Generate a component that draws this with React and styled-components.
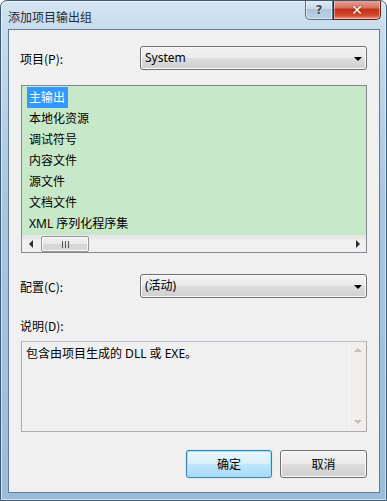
import React from "react";
import styled, { createGlobalStyle } from "styled-components";

const Global = createGlobalStyle`
  html, body { margin: 0; padding: 0; background: #ffffff; }
  body { font-family: "Noto Sans CJK SC", "Noto Sans", sans-serif; font-size: 12px; }
  * { box-sizing: border-box; }
`;

const Window = styled.div`
  position: relative;
  width: 387px;
  height: 501px;
  border: 1px solid #3d5a75;
  border-radius: 7px 7px 0 0;
  background: linear-gradient(180deg, #d5e4f1 0px, #c7dbec 30px, #a9c6df 200px, #9bbcd8 500px);
  display: flex;
  flex-direction: column;
  overflow: hidden;
  box-shadow: inset 0 0 0 1px rgba(255,255,255,0.55);
`;

const TitleBar = styled.div`
  height: 28px;
  display: flex;
  align-items: center;
  padding: 3px 0 0 7px;
  color: #1e2a36;
  font-size: 12px;
  line-height: 14px;
`;

const Caption = styled.div`
  position: absolute;
  top: -1px;
  right: 5px;
  display: flex;
`;

const CapButton = styled.div`
  height: 20px;
  width: ${p => p.$w}px;
  border: 1px solid ${p => (p.$close ? "#5e1b12" : "#5a7189")};
  border-top: none;
  border-radius: ${p => (p.$close ? "0 0 5px 0" : "0 0 0 5px")};
  background: ${p =>
    p.$close
      ? "linear-gradient(180deg, #e8a89c 0%, #d9735f 40%, #c4301a 50%, #d14a2e 80%, #e6917a 100%)"
      : "linear-gradient(180deg, #e4eef7 0%, #c9d9e8 45%, #aec4d8 50%, #bdd2e4 100%)"};
  box-shadow: inset 0 0 0 1px rgba(255,255,255,0.45);
  display: flex;
  align-items: center;
  justify-content: center;
  color: ${p => (p.$close ? "#fff" : "#3b4d60")};
  text-shadow: ${p => (p.$close ? "0 0 2px #6a1a0e" : "0 0 2px #ffffff")};
  font-family: "DejaVu Sans", sans-serif;
  font-weight: bold;
  font-size: ${p => (p.$close ? "14px" : "12px")};
`;

const Client = styled.div`
  margin: 0 6px 7px 7px;
  flex: 1;
  background: #f0f0f0;
  border: 1px solid #5f7d99;
  padding: 16px 12px 0 11px;
  display: flex;
  flex-direction: column;
  color: #000;
`;

const FieldRow = styled.div`
  display: flex;
  align-items: center;
  height: 24px;
`;

const Label = styled.div`
  width: 120px;
  line-height: 14px;
  padding-top: 1px;
`;

const Combo = styled.div`
  flex: 1;
  height: 24px;
  border: 1px solid #707070;
  border-radius: 3px;
  background: linear-gradient(180deg, #f2f2f2 0%, #ebebeb 48%, #dddddd 52%, #cfcfcf 100%);
  box-shadow: inset 0 0 0 1px #fbfbfb;
  display: flex;
  align-items: center;
  justify-content: space-between;
  padding: 0 4px 0 4px;
  font-family: "Noto Sans", "Noto Sans CJK SC", sans-serif;
  line-height: 14px;
`;

const Arrow = styled.div`
  width: 0;
  height: 0;
  border-left: 4px solid transparent;
  border-right: 4px solid transparent;
  border-top: 4px solid #000;
  margin-top: 1px;
`;

const ListBox = styled.div`
  margin-top: 15px;
  margin-left: 1px;
  height: 168px;
  border: 1px solid #828790;
  background: #c8e9c9;
  display: flex;
  flex-direction: column;
`;

const Items = styled.div`
  flex: 1;
  padding: 1px 0 0 5px;
  display: flex;
  flex-direction: column;
  align-items: flex-start;
`;

const Item = styled.div`
  height: 21px;
  line-height: 21px;
  padding: 0 3px 0 2px;
  background: ${p => (p.$sel ? "#3399ff" : "transparent")};
  color: ${p => (p.$sel ? "#fff" : "#000")};
  font-family: "Noto Sans", "Noto Sans CJK SC", sans-serif;
`;

const HScroll = styled.div`
  height: 17px;
  background: linear-gradient(180deg, #e3e3e3 0%, #f0f0f0 30%, #f0f0f0 100%);
  border-top: 1px solid #eaeaea;
  display: flex;
  align-items: center;
`;

const ScrollBtn = styled.div`
  width: 17px;
  height: 16px;
  display: flex;
  align-items: center;
  justify-content: center;
`;

const TriLeft = styled.div`
  width: 0; height: 0;
  border-top: 4px solid transparent;
  border-bottom: 4px solid transparent;
  border-right: 4px solid #2c2c2c;
`;
const TriRight = styled.div`
  width: 0; height: 0;
  border-top: 4px solid transparent;
  border-bottom: 4px solid transparent;
  border-left: 4px solid #2c2c2c;
`;

const Track = styled.div`
  flex: 1;
  height: 100%;
  display: flex;
  align-items: center;
`;

const Thumb = styled.div`
  width: 48px;
  height: 16px;
  margin-left: 2px;
  border: 1px solid #979797;
  border-radius: 2px;
  background: linear-gradient(180deg, #f3f3f3 0%, #e8e8e8 50%, #d6d6d6 52%, #d9d9d9 100%);
  box-shadow: inset 0 0 0 1px #fafafa;
  display: flex;
  align-items: center;
  justify-content: center;
  gap: 2px;
`;

const Grip = styled.div`
  width: 1px;
  height: 7px;
  background: #555;
`;

const ConfigRow = styled(FieldRow)`
  margin-top: 21px;
`;

const DescLabel = styled.div`
  margin-top: 21px;
  line-height: 14px;
`;

const TextArea = styled.div`
  margin-top: 8px;
  margin-left: 1px;
  height: 91px;
  border: 1px solid #abadb3;
  border-top-color: #b7c2cc;
  background: #f0f0f0;
  display: flex;
`;

const TextBody = styled.div`
  flex: 1;
  padding: 5px 0 0 4px;
  line-height: 14px;
  font-family: "Noto Sans", "Noto Sans CJK SC", sans-serif;
`;

const VScroll = styled.div`
  width: 17px;
  background: #f1eeeb;
  border-left: 1px solid #f5f5f5;
  display: flex;
  flex-direction: column;
  justify-content: space-between;
  align-items: center;
  padding: 6px 0 7px;
`;

const TriUp = styled.div`
  width: 0; height: 0;
  border-left: 4px solid transparent;
  border-right: 4px solid transparent;
  border-bottom: 4px solid #bfbfbf;
`;
const TriDown = styled.div`
  width: 0; height: 0;
  border-left: 4px solid transparent;
  border-right: 4px solid transparent;
  border-top: 4px solid #bfbfbf;
`;

const ButtonRow = styled.div`
  margin-top: 18px;
  display: flex;
  justify-content: flex-end;
  gap: 8px;
`;

const Button = styled.div`
  width: ${p => p.$w}px;
  height: 28px;
  border: 1px solid ${p => (p.$def ? "#3c7fb1" : "#707070")};
  border-radius: 3px;
  background: ${p =>
    p.$def
      ? "linear-gradient(180deg, #eaf6fd 0%, #d9f0fc 48%, #bee6fd 52%, #a7d9f5 100%)"
      : "linear-gradient(180deg, #f2f2f2 0%, #ebebeb 48%, #dddddd 52%, #cfcfcf 100%)"};
  box-shadow: ${p => (p.$def ? "inset 0 0 0 1px #9ee3f7, 0 0 1px #58c1e8" : "inset 0 0 0 1px #fbfbfb")};
  display: flex;
  align-items: center;
  justify-content: center;
  line-height: 14px;
`;

export default function App() {
  const items = ["主输出", "本地化资源", "调试符号", "内容文件", "源文件", "文档文件", "XML 序列化程序集"];
  return (
    <>
      <Global />
      <Window>
        <TitleBar>添加项目输出组</TitleBar>
        <Caption>
          <CapButton $w={28}>?</CapButton>
          <CapButton $w={48} $close>✕</CapButton>
        </Caption>
        <Client>
          <FieldRow>
            <Label>项目(P):</Label>
            <Combo>
              <span>System</span>
              <Arrow />
            </Combo>
          </FieldRow>
          <ListBox>
            <Items>
              {items.map((t, i) => (
                <Item key={t} $sel={i === 0}>{t}</Item>
              ))}
            </Items>
            <HScroll>
              <ScrollBtn><TriLeft /></ScrollBtn>
              <Track>
                <Thumb><Grip /><Grip /><Grip /></Thumb>
              </Track>
              <ScrollBtn><TriRight /></ScrollBtn>
            </HScroll>
          </ListBox>
          <ConfigRow>
            <Label>配置(C):</Label>
            <Combo>
              <span>(活动)</span>
              <Arrow />
            </Combo>
          </ConfigRow>
          <DescLabel>说明(D):</DescLabel>
          <TextArea>
            <TextBody>包含由项目生成的 DLL 或 EXE。</TextBody>
            <VScroll><TriUp /><TriDown /></VScroll>
          </TextArea>
          <ButtonRow>
            <Button $w={86} $def>确定</Button>
            <Button $w={87}>取消</Button>
          </ButtonRow>
        </Client>
      </Window>
    </>
  );
}
